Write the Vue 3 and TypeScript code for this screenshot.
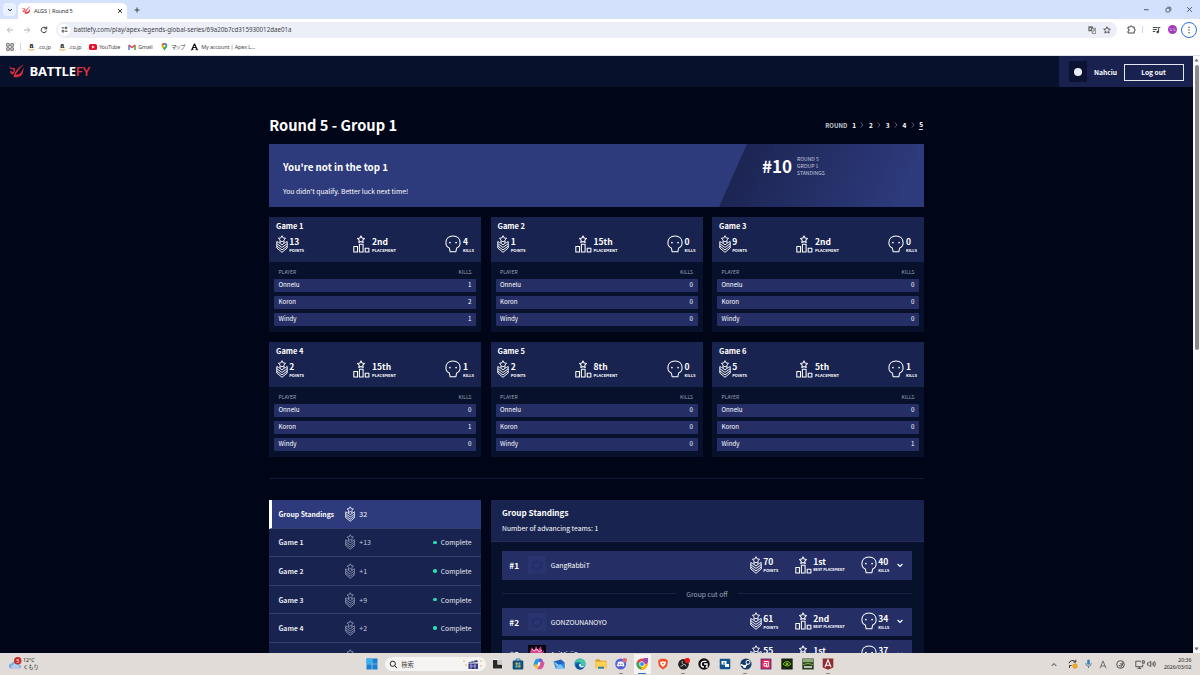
<script setup lang="ts">
interface Game { name: string; points: number; placement: string; kills: number; players: number[] }
interface Team { rank: number; name: string; points: number; placement: string; kills: number; art?: boolean }

const playerNames: string[] = ['Onnelu', 'Koron', 'Windy']
const games: Game[] = [
  { name: 'Game 1', points: 13, placement: '2nd', kills: 4, players: [1, 2, 1] },
  { name: 'Game 2', points: 1, placement: '15th', kills: 0, players: [0, 0, 0] },
  { name: 'Game 3', points: 9, placement: '2nd', kills: 0, players: [0, 0, 0] },
  { name: 'Game 4', points: 2, placement: '15th', kills: 1, players: [0, 1, 0] },
  { name: 'Game 5', points: 2, placement: '8th', kills: 0, players: [0, 0, 0] },
  { name: 'Game 6', points: 5, placement: '5th', kills: 1, players: [0, 0, 1] },
]
const teams: Team[] = [
  { rank: 1, name: 'GangRabbiT', points: 70, placement: '1st', kills: 40 },
  { rank: 2, name: 'GONZOUNANOYO', points: 61, placement: '2nd', kills: 34 },
  { rank: 3, name: 'AsiMiriiS', points: 55, placement: '1st', kills: 37, art: true },
]
const rounds: number[] = [1, 2, 3, 4, 5]
</script>

<template>
  <div class="screen">
    <svg class="defs" width="0" height="0">
      <symbol id="points" viewBox="0 0 12 18">
        <g fill="none" stroke="currentColor" stroke-width=".95" stroke-linejoin="round">
          <path d="M6 .7l1.100 2.200 2.500.4-1.800 1.700.4 2.400L6 6.300 3.800 7.400l.4-2.400-1.800-1.700 2.500-.4z" />
          <path d="M2.800 7.600L.8 6.500v6.500L6 17.300l5.200-4.300V6.500l-2 1.100" />
          <path d="M3 7.700L6 9.800l3-2.100M.8 8.700L6 12.400l5.200-3.700M.8 11L6 14.900l5.200-3.900" />
        </g>
      </symbol>
      <symbol id="podium" viewBox="0 0 17 18">
        <g fill="none" stroke="currentColor" stroke-width="1.050" stroke-linejoin="round">
          <path d="M8 .9l1.100 2.200 2.400.4-1.700 1.700.4 2.400L8 6.500 5.800 7.600l.4-2.400-1.700-1.700 2.400-.4z" />
          <path d="M.8 11.500h3.700v5.400H.8zM6.400 9.200h3.700v7.700H6.400zM12.200 13.200h3.700v3.700h-3.700z" />
        </g>
      </symbol>
      <symbol id="skull" viewBox="0 0 16 18">
        <path d="M8 .9C3.700.9.900 3.800.900 7.800c0 2.600 1 4.300 3.400 5.100l.9 3.900h5.600l.9-3.900c2.400-.8 3.400-2.500 3.400-5.100C15.100 3.800 12.300.9 8 .9z" fill="none" stroke="currentColor" stroke-width="1.050" stroke-linejoin="round" />
        <circle cx="4.900" cy="7.600" r=".85" fill="currentColor" /><circle cx="11.100" cy="7.600" r=".85" fill="currentColor" />
      </symbol>
      <symbol id="wing" viewBox="0 0 16 15">
        <path d="M.4 2C1.300 3.800 3 4.100 5.600 4.100L6.100 6.800 4 10.800 1.800 9.600C1.100 8.500 1 7.500 1 6.200L3.600 8.200 4.700 6.900 4.300 5.500 1.400 4.800Q.3 3.600.4 2z" />
        <path d="M15 .4C10.800 2 7.700 5.200 6 8.600L4.400 13c3.800.8 8.200-.3 9.200-3.500L15 3.200l-2.600 4.500c-1 2-3 3-5.600 3.100C8 7.500 10.600 4.200 15 .4z" />
      </symbol>
    </svg>

    <header class="tabs">
      <span class="tab-search"><svg width="6" height="6" viewBox="0 0 6 6"><path d="M1.200 2L3 3.900 4.800 2" fill="none" stroke="#222" stroke-width="1" /></svg></span>
      <div class="tab">
        <svg class="favicon" width="9" height="9"><use href="#wing" /></svg>
        <span class="tab-title">ALGS | Round 5</span>
        <svg width="6" height="6" viewBox="0 0 6 6"><path d="M1 1l4 4M5 1L1 5" stroke="#222" stroke-width=".9" /></svg>
      </div>
      <svg class="plus" width="6" height="6" viewBox="0 0 6 6"><path d="M3 .5v5M.5 3h5" stroke="#333" stroke-width=".9" /></svg>
      <div class="window-buttons">
        <svg width="7" height="7" viewBox="0 0 7 7"><path d="M1 3.700h4.600" stroke="#333" stroke-width=".8" /></svg>
        <svg width="7" height="7" viewBox="0 0 7 7" fill="none" stroke="#333" stroke-width=".7"><rect x="1" y="2.200" width="3.800" height="3.800" rx=".8" /><path d="M2.400 1.200h2.400q1.100 0 1.100 1.100v2.400" /></svg>
        <svg width="7" height="7" viewBox="0 0 7 7"><path d="M1.200 1.200l4.600 4.600M5.800 1.200L1.200 5.800" stroke="#333" stroke-width=".8" /></svg>
      </div>
    </header>

    <div class="toolbar">
      <svg width="8" height="8" viewBox="0 0 8 8" fill="none" stroke="#a9acb2" stroke-width=".9"><path d="M7 4H1.500M4 1.300L1.300 4 4 6.700" /></svg>
      <svg width="8" height="8" viewBox="0 0 8 8" fill="none" stroke="#a9acb2" stroke-width=".9"><path d="M1 4h5.500M4 1.300L6.700 4 4 6.700" /></svg>
      <svg width="8" height="8" viewBox="0 0 8 8" fill="none" stroke="#333" stroke-width="1"><path d="M6.500 4.700A2.700 2.700 0 1 1 6 2.200M6.700.7v2.200H4.500" /></svg>
      <div class="address">
        <span class="site-info"><svg width="7" height="7" viewBox="0 0 7 7" fill="none" stroke="#333" stroke-width=".9"><path d="M3 1.900H.5M6.500 5.200H4" /><circle cx="5" cy="1.900" r="1" /><circle cx="2" cy="5.200" r="1" /></svg></span>
        <span class="url">battlefy.com/play/apex-legends-global-series/69a20b7cd315930012dae01a</span>
        <svg class="translate" width="8" height="8" viewBox="0 0 8 8"><path d="M.3.300h4.500l1 5H.3z" fill="#6b6f76" /><path d="M3.500 2.300h4.200v5.300H4.500z" fill="#fff" stroke="#555" stroke-width=".7" /><path d="M4.700 4h2.300M5.800 3.300v.7M4.700 6.300q1.700-.8 2-2.200" stroke="#444" stroke-width=".6" fill="none" /><path d="M1.300 2.700h2M2.300 2v2" stroke="#fff" stroke-width=".6" /></svg>
        <svg width="8" height="8" viewBox="0 0 8 8"><path d="M4 .8l1 2.200 2.300.2-1.700 1.600.5 2.300L4 5.900 1.900 7.100l.5-2.300L.7 3.200 3 3z" fill="none" stroke="#333" stroke-width=".8" /></svg>
      </div>
      <svg class="ext" width="9" height="9" viewBox="0 0 9 9"><path d="M1 2h2.200q.1-1.200 1-1.200t1 1.200h2v2q1.100.1 1.100 1t-1.100 1v2H1V6q1.300 0 1.300-1T1 4z" fill="none" stroke="#333" stroke-width=".9" /></svg>
      <i class="divider"></i>
      <svg class="media" width="9" height="8" viewBox="0 0 9 8"><path d="M.8 1.500h5M.8 3.500h4M.8 5.500h2.500M6.600 6V1.500h1.700" fill="none" stroke="#333" stroke-width=".9" /><circle cx="5.700" cy="6" r="1.200" fill="#333" /></svg>
      <span class="profile">なな</span>
      <span class="menu"><svg width="4" height="8" viewBox="0 0 4 8" fill="#333"><circle cx="2" cy="1.300" r=".7" /><circle cx="2" cy="4" r=".7" /><circle cx="2" cy="6.700" r=".7" /></svg></span>
    </div>

    <nav class="bookmarks">
      <svg class="apps" width="8" height="8" viewBox="0 0 8 8" fill="none" stroke="#555" stroke-width=".9"><path d="M.7.700h2.500v2.500H.7zM4.800.700h2.500v2.500H4.800zM.7 4.800h2.500v2.500H.7zM4.800 4.800h2.500v2.500H4.800z" /></svg>
      <i class="divider"></i>
      <span v-for="n in 2" :key="n" class="bm amazon"><span class="a-mark"><b>a</b><svg width="7" height="2" viewBox="0 0 7 2"><path d="M.4.4q3 1.700 6 0" fill="none" stroke="#f39b1c" stroke-width=".9" /></svg></span>.co.jp</span>
      <span class="bm youtube"><svg width="8" height="6" viewBox="0 0 8 6"><rect width="8" height="6" rx="1.500" fill="#e8112d" /><path d="M3.100 1.600v2.800L5.600 3z" fill="#fff" /></svg>YouTube</span>
      <span class="bm gmail"><svg width="8" height="6" viewBox="0 0 8 6" fill="none" stroke-width="1.500"><path d="M1 6V1.200" stroke="#4285f4" /><path d="M7 6V1.200" stroke="#34a853" /><path d="M.8 1L4 3.500 7.200 1" stroke="#ea4335" /></svg>Gmail</span>
      <span class="bm maps"><svg width="7" height="8" viewBox="0 0 7 8"><path d="M3.500 0A2.800 2.800 0 0 1 6.300 2.800C6.300 5 4 5.500 3.500 8 3 5.500.7 5 .7 2.800A2.800 2.800 0 0 1 3.500 0z" fill="#34a853" /><path d="M.7 2.800A2.800 2.800 0 0 1 3.500 0v2z" fill="#ea4335" /><path d="M3.500 0a2.800 2.800 0 0 1 2.500 1.500L3.500 3z" fill="#4285f4" /><path d="M.7 3l2-1.200L4 4 1.700 5z" fill="#fbbc04" /><circle cx="3.500" cy="2.800" r="1" fill="#fff" /></svg><span class="kana">マップ</span></span>
      <span class="bm apex"><svg width="7" height="8" viewBox="0 0 7 8"><path d="M3.500.800L.8 6.600 2.500 6M3.500.800l2.700 5.800L4.500 6M2.300 4.500h2.400" fill="none" stroke="#111" stroke-width="1.100" /></svg>My account | Apex L...</span>
    </nav>

    <div class="viewport">
      <div class="page">
        <header class="site-header">
          <svg class="brand-mark" width="16" height="15"><use href="#wing" /></svg>
          <span class="brand">BATTLE<b>FY</b></span>
          <div class="account">
            <span class="avatar"><i></i></span>
            <span class="username">Nahciu</span>
            <button class="logout">Log out</button>
          </div>
        </header>

        <main class="content">
          <div class="heading">
            <h1>Round 5 - Group 1</h1>
            <div class="rounds">
              <span class="rounds-label">ROUND</span>
              <template v-for="r in rounds" :key="r">
                <svg v-if="r > 1" width="4" height="6" viewBox="0 0 4 6"><path d="M.8.500L3 3 .8 5.500" fill="none" stroke="#6b7690" stroke-width=".8" /></svg>
                <b :class="{ current: r === 5 }">{{ r }}</b>
              </template>
            </div>
          </div>

          <section class="banner">
            <div class="message"><h2>You're not in the top 1</h2><p>You didn't qualify. Better luck next time!</p></div>
            <div class="place"><strong>#10</strong><span>ROUND 5<br>GROUP 1<br>STANDINGS</span></div>
          </section>

          <section class="games">
            <article v-for="g in games" :key="g.name" class="game">
              <div class="game-head">
                <h3>{{ g.name }}</h3>
                <div class="stats">
                  <div class="stat"><svg class="i-points"><use href="#points" /></svg><div><b>{{ g.points }}</b><small>POINTS</small></div></div>
                  <div class="stat"><svg class="i-podium"><use href="#podium" /></svg><div><b>{{ g.placement }}</b><small>PLACEMENT</small></div></div>
                  <div class="stat"><svg class="i-skull"><use href="#skull" /></svg><div><b>{{ g.kills }}</b><small>KILLS</small></div></div>
                </div>
              </div>
              <div class="players">
                <div class="columns"><span>PLAYER</span><span>KILLS</span></div>
                <div v-for="(p, i) in playerNames" :key="p" class="player"><span>{{ p }}</span><span>{{ g.players[i] }}</span></div>
              </div>
            </article>
          </section>

          <hr>

          <section class="standings">
            <aside class="side">
              <div class="side-row active"><b>Group Standings</b><svg class="i-side"><use href="#points" /></svg><span class="gain">32</span></div>
              <div v-for="g in games.slice(0, 5)" :key="g.name" class="side-row">
                <b>{{ g.name }}</b><svg class="i-side"><use href="#points" /></svg><span class="gain">+{{ g.points }}</span>
                <i class="dot"></i><span class="complete">Complete</span>
              </div>
            </aside>
            <div class="board">
              <div class="board-head"><h3>Group Standings</h3><p>Number of advancing teams: 1</p></div>
              <div class="teams">
                <template v-for="t in teams" :key="t.rank">
                  <div class="team">
                    <b class="rank">#{{ t.rank }}</b>
                    <svg class="team-logo" viewBox="0 0 18 18">
                      <template v-if="t.art"><rect width="18" height="18" fill="#0a0610" /><path d="M2 7l2-5 2 4 2-5 2 4 3-4 1 6 2-2-1 6H3z" fill="#d7458f" /><path d="M4 4l2 2 3-2 2 3 3-2" stroke="#ffc5da" fill="none" /></template>
                      <template v-else><rect width="18" height="18" fill="#29346f" /><path d="M9 5l4 2v4l-4 3-4-3V7z" fill="none" stroke="#242e68" stroke-width="2" /></template>
                    </svg>
                    <span class="team-name">{{ t.name }}</span>
                    <div class="stat t-points"><svg class="i-points"><use href="#points" /></svg><div><b>{{ t.points }}</b><small>POINTS</small></div></div>
                    <div class="stat t-place"><svg class="i-podium"><use href="#podium" /></svg><div><b>{{ t.placement }}</b><small>BEST PLACEMENT</small></div></div>
                    <div class="stat t-kills"><svg class="i-skull"><use href="#skull" /></svg><div><b>{{ t.kills }}</b><small>KILLS</small></div></div>
                    <svg class="chev" width="6" height="5" viewBox="0 0 6 5"><path d="M.6 1L3 3.500 5.400 1" fill="none" stroke="#fff" stroke-width="1.200" /></svg>
                  </div>
                  <div v-if="t.rank === 1" class="cutoff"><i></i><span>Group cut off</span><i></i></div>
                </template>
              </div>
            </div>
          </section>
        </main>
      </div>
      <div class="scrollbar">
        <svg width="7" height="8" viewBox="0 0 7 8"><path d="M1.300 5.500L3.500 2.500l2.200 3z" fill="#777" /></svg>
        <i class="thumb"></i>
        <svg class="down" width="7" height="8" viewBox="0 0 7 8"><path d="M1.300 2.500L3.500 5.500l2.200-3z" fill="#777" /></svg>
      </div>
    </div>

    <footer class="taskbar">
      <div class="weather">
        <svg width="14" height="16" viewBox="0 0 14 16"><path d="M2 12.500a2.500 2.500 0 0 1 .5-5A4 4 0 0 1 10 8.500a2 2 0 0 1 0 4z" fill="#83aee0" /><path d="M3 12.500a2 2 0 0 1 1-3.500 3 3 0 0 1 5 0 1.800 1.800 0 0 1 0 3.500z" fill="#b3cdec" /><circle cx="8.800" cy="4.700" r="3.700" fill="#c62828" /><text x="8.800" y="6.700" font-size="5.500" text-anchor="middle" fill="#fff" font-family="Noto Sans">5</text></svg>
        <span>12°C<br>くもり</span>
      </div>
      <div class="dock">
        <span class="slot"><svg viewBox="0 0 12 12"><path d="M.5.500h5.200v5.200H.5zM6.300.500h5.200v5.200H6.300zM.5 6.300h5.200v5.200H.5zM6.300 6.300h5.200v5.200H6.300z" fill="#1682d4" /><path d="M.5.500h5.200v5.200H.5z" fill="#39b3ed" /></svg></span>
        <div class="search">
          <svg width="9" height="9" viewBox="0 0 9 9"><circle cx="3.800" cy="3.800" r="2.600" fill="none" stroke="#222" /><path d="M5.700 5.700L8 8" stroke="#222" /></svg>
          <span>検索</span>
          <svg class="clapper" width="22" height="12" viewBox="0 0 22 12"><path d="M6 4.500l9-2.500 1 2-9 1zM6.500 5.500H16V11H6.500z" fill="#373a86" /><path d="M8 4l1.500 1M11 3l1.500 1M8 8h6M9 6v5M13 6v5" stroke="#cbd0f3" stroke-width=".7" /><path d="M1 3l1-1 1 1-1 1zM3 7l1-1 1 1-1 1zM18 3l1-1 1 1-1 1zM18 8l1-1 1 1-1 1z" fill="#e6b64c" /></svg>
        </div>
        <span class="slot"><svg viewBox="0 0 12 12"><path d="M2 1h9v10H2z" fill="#f6f6f5" /><path d="M2 2h4.500v4.500H11V10.500H2z" fill="#292929" /><path d="M6.500 1.500H11v5H6.500z" fill="#c9c9c7" /></svg></span>
        <span class="slot"><svg viewBox="0 0 12 12"><path d="M4 3V1h4v2" fill="none" stroke="#2a8dbf" /><rect x=".7" y="2.500" width="10.600" height="9" rx="1.200" fill="#124d75" /><path d="M3.500 4.500h2.200v2.200H3.500zM6.300 7.300h2.200v2.200H6.300z" fill="#e7b33d" /><path d="M6.300 4.500h2.200v2.200H6.300zM3.500 7.300h2.200v2.200H3.500z" fill="#57bfe8" /></svg></span>
        <span class="slot"><svg viewBox="0 0 12 12"><path d="M4 .8h4L6.500 5 5 8.500H1.500Q0 8 1 5 2 1 4 .8z" fill="#269fde" /><path d="M1 6.500h5L4.500 11Q2.500 11.500 2 9z" fill="#f4bd31" /><path d="M8 .8q1.500.2 1.800 3H11q1 1-.2 4Q9.500 11.500 7.800 11.300H4.500L7 5z" fill="#d8569e" /><path d="M6 .8h2q1.500.2 1.800 3H6.500z" fill="#7557d7" /><path d="M5.300 4.200h2L6.500 7.800h-2z" fill="#fff" /></svg></span>
        <span class="slot"><svg viewBox="0 0 12 12"><path d="M.5 3.500L8 1.500l3.500 3V10h-8z" fill="#1f63bd" /><path d="M.5 3.500L6 7l5.500-2.500V10.500H2.500z" fill="#2e8de0" /><path d="M2.500 10.500L7 6l4.500 4.500z" fill="#7cc8f5" /><path d="M.5 3.500L6 7 4 8.500z" fill="#9bd1f4" /></svg></span>
        <span class="slot"><svg viewBox="0 0 12 12"><circle cx="6" cy="6" r="5.500" fill="#1475b7" /><path d="M.7 5C2-.7 11-.8 11.500 5.500c0 2.500-3 3-4.300 1.800C8 5 5 2.500.7 5z" fill="#41c8a5" /><path d="M5 5.500c-2 2.800 1.500 6 5 4-1.200 1.700-3 2.300-5 1.800C1 10.300.8 5.500 5 5.500z" fill="#0c4d9a" /><path d="M5.200 6q1.600-1 2 .8-.7 1.200 2 1.500l1.800-.7q-1 2.200-3.800 1.700Q4.500 8.800 5.200 6z" fill="#e5eff0" /></svg></span>
        <span class="slot"><svg viewBox="0 0 12 12"><path d="M.5 1.500h4l1.200 1.300h5.800V10H.5z" fill="#d99813" /><path d="M.5 3.500h11v7.200H.5z" fill="#ffd052" /><path d="M3 8.700h6v2H3z" fill="#2580c4" /></svg></span>
        <span class="slot run"><svg viewBox="0 0 12 12"><circle cx="5.700" cy="6" r="5.500" fill="#5865d8" /><path d="M3 4q2.700-1 5.400 0l1 4q-1.500.8-2.200 0H4.200q-.8.800-2.200 0z" fill="#fff" /><circle cx="4.500" cy="6.300" r=".8" fill="#5865d8" /><circle cx="7" cy="6.300" r=".8" fill="#5865d8" /><circle cx="9.800" cy="2.200" r="2.200" fill="#e06b76" /></svg></span>
        <span class="slot selected"><svg viewBox="0 0 12 12"><circle cx="6" cy="6" r="5.500" fill="#ea4335" /><path d="M6 6L1 3.500C-.500 7.500 2 11.500 6 11.500z" fill="#34a853" /><path d="M6 6h5.500c0 3-2.500 5.500-5.500 5.500L5 11z" fill="#fbbc04" /><circle cx="6" cy="6" r="2.700" fill="#fff" /><circle cx="6" cy="6" r="2" fill="#4285f4" /><circle cx="9.700" cy="2.300" r="2.800" fill="#9a4bb8" /></svg></span>
        <span class="slot"><svg viewBox="0 0 12 12"><path d="M3.500.700h5l2.500 2-1 5.500-4 3.300-4-3.300-1-5.500z" fill="#f05028" /><path d="M3 3.500l2 .3 1-.5 1 .5 2-.3-.7 3.200L6 9 3.700 6.700z" fill="#fff" /><path d="M5 5l1 2 1-2z" fill="#f05028" /></svg></span>
        <span class="slot run"><svg viewBox="0 0 12 12"><circle cx="5.500" cy="6.300" r="5.300" fill="#222" /><path d="M5.500 6.300Q3 5 4.300 3M5.500 6.300Q8 6 8 8.500M5.500 6.300Q4.500 9 2.500 8" fill="none" stroke="#bbb" stroke-width=".9" /><circle cx="9.300" cy="2.500" r="2.700" fill="#ed1b18" /></svg></span>
        <span class="slot"><svg viewBox="0 0 12 12"><circle cx="6" cy="6" r="5.700" fill="#111" /><path d="M8.500 3.300H6A2.800 2.800 0 0 0 6 9M6 6h3v3H7.700" fill="none" stroke="#fff" stroke-width="1.300" /></svg></span>
        <span class="slot"><svg viewBox="0 0 12 12"><rect x=".7" y=".7" width="10.600" height="10.600" rx="1" fill="#12548f" /><path d="M2.500 3h5v3.500h-5zM6 6h4v3H6z" fill="#fff" /><path d="M4 4.500h2v1H4z" fill="#12548f" /></svg></span>
        <span class="slot run"><svg viewBox="0 0 12 12"><circle cx="6" cy="6" r="5.600" fill="#143b69" /><path d="M.7 6.500L5 8.500 8.500 4.500" fill="none" stroke="#fff" stroke-width="1.400" /><circle cx="8" cy="4.300" r="2" fill="#143b69" stroke="#fff" /><circle cx="4.600" cy="8.500" r="1.500" fill="#fff" /></svg></span>
        <span class="slot"><svg viewBox="0 0 12 12"><rect x=".6" y=".6" width="10.800" height="10.800" fill="#452b74" /><rect x="1.500" y="1.500" width="9" height="9" fill="#ec255b" /><path d="M4 3.500h4.300v5.200H6M4 5.500h2.500V8H4z" fill="none" stroke="#fff" /></svg></span>
        <span class="slot"><svg viewBox="0 0 12 12"><rect x=".3" y=".5" width="11.400" height="11" fill="#182411" /><path d="M2 6q4-5 8 0-4 4-8 0z" fill="none" stroke="#76b900" /><circle cx="6" cy="6" r="1.500" fill="#76b900" /></svg></span>
        <span class="slot"><svg viewBox="0 0 12 12"><rect x=".3" y=".5" width="11.400" height="11" fill="#2c3d28" /><path d="M.8 1h10.400v3.200H.8z" fill="#8eaa79" /><path d="M1 6.500q5-2 10 0" fill="none" stroke="#80b736" /><path d="M2 9h8" stroke="#e5f4d7" stroke-width="1.500" /></svg></span>
        <span class="slot run"><svg viewBox="0 0 12 12"><path d="M.7.500h10.600v9L6 11.700.7 9.500z" fill="#932c31" /><path d="M3 9L6 2l3 7M4.300 7.300h3.400" fill="none" stroke="#fff" stroke-width="1.100" /></svg></span>
      </div>
      <div class="tray">
        <svg class="up" width="6" height="5" viewBox="0 0 6 5"><path d="M.7 4L3 1.500 5.300 4" fill="none" stroke="#333" stroke-width=".9" /></svg>
        <svg class="sync" width="10" height="10" viewBox="0 0 10 10" fill="none" stroke="#333"><path d="M1 4.200A3.700 3.700 0 0 1 7.500 3M7.800.900V3H5.500M1.500 9V6.500h2" /><rect x="5" y="5" width="4" height="4" rx="1" fill="#f7ad2b" stroke="#e29b25" /></svg>
        <svg class="mic" width="7" height="10" viewBox="0 0 7 10"><rect x="2.200" y=".6" width="2.600" height="5.200" rx="1.300" fill="#2f82c6" /><path d="M.8 4q0 3.200 2.700 3.200T6.200 4M3.500 7.200v2" fill="none" stroke="#567" stroke-width=".8" /></svg>
        <svg class="ime" width="8" height="9" viewBox="0 0 8 9"><path d="M1 8.300L4 .9l3 7.400M2 5.900h4" fill="none" stroke="#555" stroke-width=".8" /></svg>
        <svg class="swirl" width="9" height="9" viewBox="0 0 9 9" fill="none" stroke="#333" stroke-width=".8"><circle cx="4.500" cy="4.500" r="3.800" /><path d="M2.500 5.700q2.500.8 3.500-1.200Q5.500 2.700 4.200 4M4.500 7.300Q7.300 6 6.800 2.300" /></svg>
        <svg class="net" width="10" height="9" viewBox="0 0 10 9" fill="none" stroke="#333" stroke-width=".8"><path d="M6 1.200H.8v5.500h7V4.500M2.500 8.400h3.600M4.300 6.700v1.700" /><path d="M7.300.8h2v2.400h-2z" /></svg>
        <svg class="sound" width="9" height="8" viewBox="0 0 9 8" fill="none" stroke="#333" stroke-width=".7"><path d="M.5 2.800h1.300L3.700 1.200v5.600L1.800 5.200H.5zM5 2.800q.8 1.200 0 2.400M6.200 1.800q1.600 2.200 0 4.400M7.400 1q2.200 3 0 6" /></svg>
        <div class="clock">20:36<br>2026/03/02</div>
      </div>
    </footer>
  </div>
</template>

<style>
body { margin: 0; overflow: hidden; background: #000616; }
</style>

<style scoped>
* { box-sizing: border-box; }
svg { display: block; flex: none; }
h1, h2, h3, p { margin: 0; }
.defs { position: absolute; }
.screen { width: 1200px; height: 675px; overflow: hidden; display: flex; flex-direction: column; font-family: "Noto Sans", "Noto Sans CJK JP", sans-serif; }

.tabs { height: 19px; flex: none; background: #d3e1fd; display: flex; align-items: center; }
.tab-search { width: 13px; height: 13px; margin-left: 3px; border-radius: 4px; background: #e9f0fe; display: grid; place-items: center; }
.tab { align-self: flex-end; height: 16px; width: 109px; margin-left: 2px; background: #fff; border-radius: 5px 5px 0 0; display: flex; align-items: center; padding: 0 4px 1px 4px; }
.favicon { fill: #e2313c; }
.tab-title { flex: 1; margin-left: 3px; font-size: 5.700px; color: #333; letter-spacing: -.25px; white-space: nowrap; }
.plus { margin-left: 7px; }
.window-buttons { margin-left: auto; display: flex; gap: 14.500px; padding-right: 7px; }

.toolbar { height: 21px; flex: none; background: #fff; display: flex; align-items: center; padding-left: 6px; gap: 9px; }
.address { width: 1061px; height: 16px; margin-left: -1px; border-radius: 8px; background: #eceff8; display: flex; align-items: center; padding: 0 6px 0 2px; }
.site-info { width: 12px; height: 12px; border-radius: 50%; background: #fff; display: grid; place-items: center; }
.url { font-size: 6.200px; color: #3f4247; margin-left: 3.700px; white-space: nowrap; }
.translate { margin-left: auto; margin-right: 7px; }
.divider { width: 1px; height: 7px; background: #cbd6ee; flex: none; }
.ext { margin-left: .5px; }
.toolbar .divider { margin-left: -2.500px; }
.media { margin-left: 0; }
.profile { width: 9px; height: 9px; border-radius: 50%; background: #a13bb8; color: #f1d9f4; font-size: 3.500px; line-height: 9px; text-align: center; flex: none; margin-left: -2px; }
.menu { width: 16px; height: 16px; border: 1px solid #2f6fe0; border-radius: 50%; display: grid; place-items: center; flex: none; margin-left: -5px; }

.bookmarks { height: 16px; flex: none; background: #fff; display: flex; align-items: center; padding: 0 0 2px 5.500px; font-size: 5.400px; color: #444; border-bottom: 1px solid #dce2ec; }
.bookmarks .divider { margin: 0 7px 0 6.500px; }
.bm { display: flex; align-items: center; gap: 2px; white-space: nowrap; letter-spacing: -.1px; }
.amazon { width: 30.600px; }
.a-mark { width: 7px; display: flex; flex-direction: column; align-items: center; margin-right: 1px; }
.a-mark b { font: 700 7px/6px "Liberation Sans", sans-serif; color: #111; }
.youtube { width: 39px; }
.gmail { width: 33px; }
.maps { width: 30px; }
.maps svg { margin-right: 1px; }
.kana { letter-spacing: -1px; }
.apex svg { margin-right: 1px; }

.viewport { flex: 1; min-height: 0; display: flex; overflow: hidden; }
.page { width: 1193px; height: 597px; overflow: hidden; background: #000617; color: #fff; font-family: "Noto Sans CJK JP", "Noto Sans", sans-serif; }
.scrollbar { width: 7px; background: #fafafa; display: flex; flex-direction: column; align-items: center; }
.thumb { width: 4px; height: 285px; border-radius: 2px; background: #8b8b8b; margin-top: 1px; }
.down { margin-top: auto; }

.site-header { height: 31px; background: #08112c; display: flex; align-items: center; padding-left: 9px; }
.brand-mark { fill: #db2e38; margin-top: -1px; }
.brand { margin: -1px 0 0 4.500px; font-family: "Open Sans", sans-serif; font-weight: 700; font-size: 13px; line-height: 20px; letter-spacing: -.18px; }
.brand b { color: #e7323b; font-weight: 600; }
.account { margin-left: auto; width: 134px; height: 31px; background: #19224f; display: flex; align-items: center; padding-left: 9.500px; }
.avatar { width: 18px; height: 21px; background: #0a1331; display: grid; place-items: center; }
.avatar i { width: 8px; height: 8px; border-radius: 50%; background: #e9ecf2; }
.username { width: 37px; padding-left: 7.500px; font-size: 6.700px; font-weight: 700; }
.logout { width: 60px; height: 17px; margin: 1px 0 0; padding: 0; border: 1px solid #e4e7f2; background: transparent; color: #fff; font: 700 6.700px/14px "Noto Sans CJK JP", sans-serif; }

.content { width: 655px; margin-left: 269px; }
.heading { display: flex; justify-content: space-between; align-items: center; height: 57px; padding-top: 19px; }
h1 { font-size: 14.650px; line-height: 22px; font-weight: 700; white-space: nowrap; margin: -1px 0 0 .3px; }
.rounds { display: flex; align-items: center; gap: 4.400px; font-size: 6.500px; line-height: 9px; padding-right: .8px; }
.rounds b { width: 4px; text-align: center; }
.rounds-label { color: #c3c8d5; font-weight: 700; font-size: 6px; margin-right: .5px; }
.rounds .current { border-bottom: 1px solid #cfd3df; }

.banner { height: 63px; background: #2d3a7b; display: flex; justify-content: space-between; }
.message { padding: 15px 0 0 14px; }
h2 { font-size: 9.750px; line-height: 16px; font-weight: 700; }
.message p { font-size: 6.750px; line-height: 10px; margin-top: 10.500px; }
.place { width: 205px; background: linear-gradient(112deg, #1c2553 12%, #2d3a7b 88%); clip-path: polygon(28px 0, 100% 0, 100% 100%, 0 100%); display: flex; padding: 10.500px 0 0 43px; }
.place strong { font-size: 17px; line-height: 25px; width: 35px; margin-top: -1.500px; }
.place span { font-size: 5.100px; line-height: 7.300px; color: #c3c9de; }

.games { display: grid; grid-template-columns: repeat(3, 212px); column-gap: 9.500px; row-gap: 10px; margin-top: 10px; }
.game { height: 115px; background: #08112c; }
.game-head { height: 45px; background: #19234f; padding: 3px 7px 0; }
.game h3 { font-size: 7.500px; line-height: 12px; }
.stats { display: flex; justify-content: space-between; margin: 3px 0 0 -.5px; }
.stat { display: flex; gap: 1.700px; }
.stat > div { display: flex; flex-direction: column; margin-top: .5px; }
.stat b { font-size: 8.500px; line-height: 11px; }
.stat small { font-size: 4px; line-height: 6.500px; font-weight: 700; white-space: nowrap; }
.i-points { width: 12px; height: 18px; }
.i-podium { width: 17px; height: 18px; }
.i-skull { width: 16px; height: 18px; }
.players { padding: 6px 5px 0; }
.columns { display: flex; justify-content: space-between; padding: 0 4.500px; font-size: 5px; line-height: 8px; color: #98a0b5; margin-bottom: 3px; }
.player { height: 13px; margin-bottom: 3.900px; background: #252f66; border-radius: 1px; display: flex; justify-content: space-between; padding: 0 4.500px; font-size: 6.200px; line-height: 12px; }
hr { border: 0; height: 1px; background: #111b35; margin: 21px 0; }

.standings { display: flex; justify-content: space-between; }
.side { width: 212px; }
.side-row { height: 28.600px; background: #19234f; border-bottom: 1px solid #344069; display: flex; align-items: center; padding: 0 9.500px; font-size: 6.800px; color: #e5e8f2; }
.side-row b { width: 66px; white-space: nowrap; }
.i-side { width: 10.500px; height: 16px; color: #959db6; }
.gain { margin-left: 4.300px; color: #c6cbdc; font-size: 7px; }
.active { background: #2d3a7b; border-left: 3px solid #fff; padding-left: 6.500px; color: #fff; }
.active .i-side, .active .gain { color: #fff; }
.dot { width: 3.500px; height: 3.500px; border-radius: 50%; background: #2be0b0; margin-left: auto; }
.complete { margin-left: 4px; }
.board { width: 433px; height: 200px; background: #08112c; }
.board-head { height: 42px; background: #19234f; border-bottom: 1px solid #242e59; padding: 7px 11px; }
.board h3 { font-size: 8.150px; line-height: 12px; }
.board p { font-size: 6.800px; line-height: 10px; margin-top: 3.500px; }
.teams { padding: 9px 12px 0 11px; }
.team { height: 28.500px; margin-bottom: 4px; background: #252f66; display: flex; align-items: center; padding-left: 7.300px; }
.rank { font-size: 8.200px; width: 18.500px; flex: none; }
.team-logo { width: 18px; height: 18px; }
.team-name { width: 204px; flex: none; padding-left: 5px; font-size: 6.800px; }
.t-points { width: 45px; flex: none; }
.t-place { width: 66px; flex: none; }
.t-kills { width: 36px; flex: none; }
.team .stat { gap: 1.500px; margin-top: -1px; }
.t-place small { font-size: 3.600px; }
.cutoff { display: flex; align-items: center; gap: 10px; height: 28px; margin-top: -4px; font-size: 6.800px; color: #9da4b7; }
.cutoff i { flex: 1; height: 1px; background: #172141; }

.taskbar { height: 22px; flex: none; background: #e1dcd8; display: flex; align-items: center; color: #222; position: relative; }
.weather { width: 362px; display: flex; align-items: center; padding-left: 9px; font-size: 5.200px; line-height: 7px; }
.dock { display: flex; align-items: center; }
.slot { width: 20.700px; height: 20px; display: grid; place-items: center; position: relative; flex: none; }
.slot svg { width: 12px; height: 12px; }
.slot.selected { background: linear-gradient(90deg, transparent 2px, #f5f4f2 2px, #f5f4f2 18.500px, transparent 18.500px); }
.run::after, .selected::after { content: ""; position: absolute; bottom: 0; left: 8px; width: 4px; height: 1px; border-radius: 1px; background: #888; }
.slot.selected::after { width: 8px; left: 6px; height: 1.500px; background: #2878c8; }
.search { width: 101px; height: 14px; margin: 0 .8px 0 2.500px; border-radius: 7px; background: #f6f4f2; display: flex; align-items: center; padding: 0 2px 0 4px; font-size: 6.300px; color: #444; }
.search span { margin-left: 3px; }
.clapper { margin-left: auto; }
.tray { margin-left: auto; display: flex; align-items: center; padding-right: 8.500px; }
.up { margin-right: 10.500px; }
.sync { margin-right: 7px; }
.mic { margin-right: 7.500px; }
.ime { margin-right: 9px; }
.swirl { margin-right: 9.500px; }
.net { margin-right: 2px; }
.clock { width: 31px; font-size: 5.200px; line-height: 7.500px; text-align: right; white-space: nowrap; margin-left: 5px; }
</style>
